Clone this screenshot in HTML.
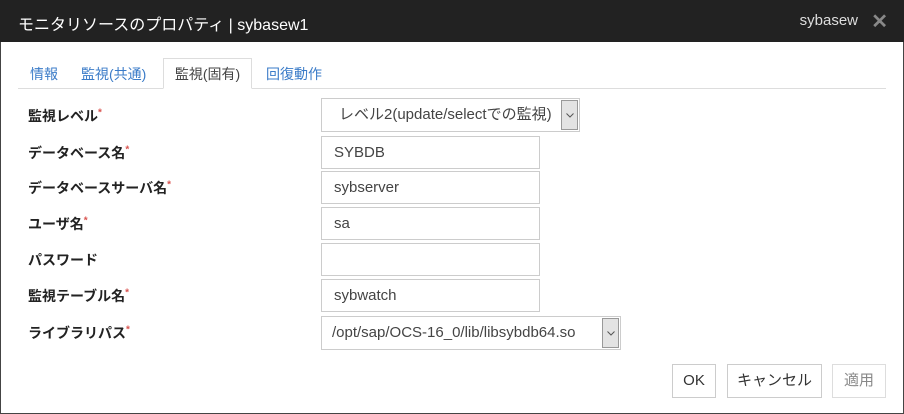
<!DOCTYPE html><html><head><meta charset="utf-8"><style>
body{margin:0;width:904px;height:414px;background:#fff;font-family:"Liberation Sans","Noto Sans CJK JP",sans-serif;font-size:14px;color:#333;position:relative;overflow:hidden}
.win{position:absolute;left:0;top:0;width:902px;height:412px;border:1px solid #444;}
.hd{position:absolute;left:0;top:0;width:904px;height:42px;background:#222;color:#fff;font-size:16px}
.hd .t{position:absolute;left:18px;top:11px}
.hd .r{position:absolute;right:46px;top:12px;font-size:15px;color:#ddd}
.hd .x{position:absolute;right:16px;top:9px;font-size:20px;color:#888;font-weight:bold}
.tabline{position:absolute;left:18px;top:88px;width:868px;height:1px;background:#ddd}
.tab{position:absolute;top:64px;color:#3a7bc8;font-size:14px}
.atab{position:absolute;left:163px;top:58px;width:89px;height:31px;border:1px solid #ddd;border-bottom:1px solid #fff;box-sizing:border-box;background:#fff;color:#444;text-align:center;line-height:30px}
.lb{position:absolute;left:28px;font-weight:bold;color:#222}
.lb sup{color:#d9534f;font-size:10px}
.in{position:absolute;left:321px;width:219px;height:33px;border:1px solid #ccc;box-sizing:border-box;padding-left:12px;line-height:31px;color:#444;font-size:15px}
.sel{position:absolute;left:321px;height:34px;border:1px solid #ccc;box-sizing:border-box;color:#444;line-height:32px;font-size:15px}
.arr{position:absolute;right:1px;top:1px;width:17px;height:30px;background:#e3e3e3;border:1px solid #999;box-sizing:border-box}
.arr svg{position:absolute;left:4px;top:12px}
.btn{position:absolute;top:364px;height:34px;border:1px solid #ccc;box-sizing:border-box;text-align:center;line-height:32px;color:#333;font-size:15px}
</style></head><body>
<div class="win"></div>
<div class="hd"><span class="t">モニタリソースのプロパティ | sybasew1</span><span class="r">sybasew</span><span class="x">✕</span></div>
<div class="tabline"></div>
<span class="tab" style="left:30px">情報</span>
<span class="tab" style="left:81px">監視(共通)</span>
<div class="atab">監視(固有)</div>
<span class="tab" style="left:266px">回復動作</span>
<span class="lb" style="top:106px">監視レベル<sup>*</sup></span>
<div class="sel" style="top:98px;width:259px;padding-left:17px">レベル2(update/selectでの監視)<span class="arr"><svg width="8" height="5"><path d="M0.5 0.5L4 4L7.5 0.5" fill="none" stroke="#555" stroke-width="1"/></svg></span></div>
<span class="lb" style="top:143px">データベース名<sup>*</sup></span>
<div class="in" style="top:136px">SYBDB</div>
<span class="lb" style="top:178px">データベースサーバ名<sup>*</sup></span>
<div class="in" style="top:171px">sybserver</div>
<span class="lb" style="top:214px">ユーザ名<sup>*</sup></span>
<div class="in" style="top:207px">sa</div>
<span class="lb" style="top:250px">パスワード</span>
<div class="in" style="top:243px"></div>
<span class="lb" style="top:286px">監視テーブル名<sup>*</sup></span>
<div class="in" style="top:279px">sybwatch</div>
<span class="lb" style="top:323px">ライブラリパス<sup>*</sup></span>
<div class="sel" style="top:316px;width:300px;padding-left:10px">/opt/sap/OCS-16_0/lib/libsybdb64.so<span class="arr"><svg width="8" height="5"><path d="M0.5 0.5L4 4L7.5 0.5" fill="none" stroke="#555" stroke-width="1"/></svg></span></div>
<div class="btn" style="left:672px;width:44px">OK</div>
<div class="btn" style="left:727px;width:95px">キャンセル</div>
<div class="btn" style="left:832px;width:54px;color:#888;border-color:#ddd">適用</div>
</body></html>
